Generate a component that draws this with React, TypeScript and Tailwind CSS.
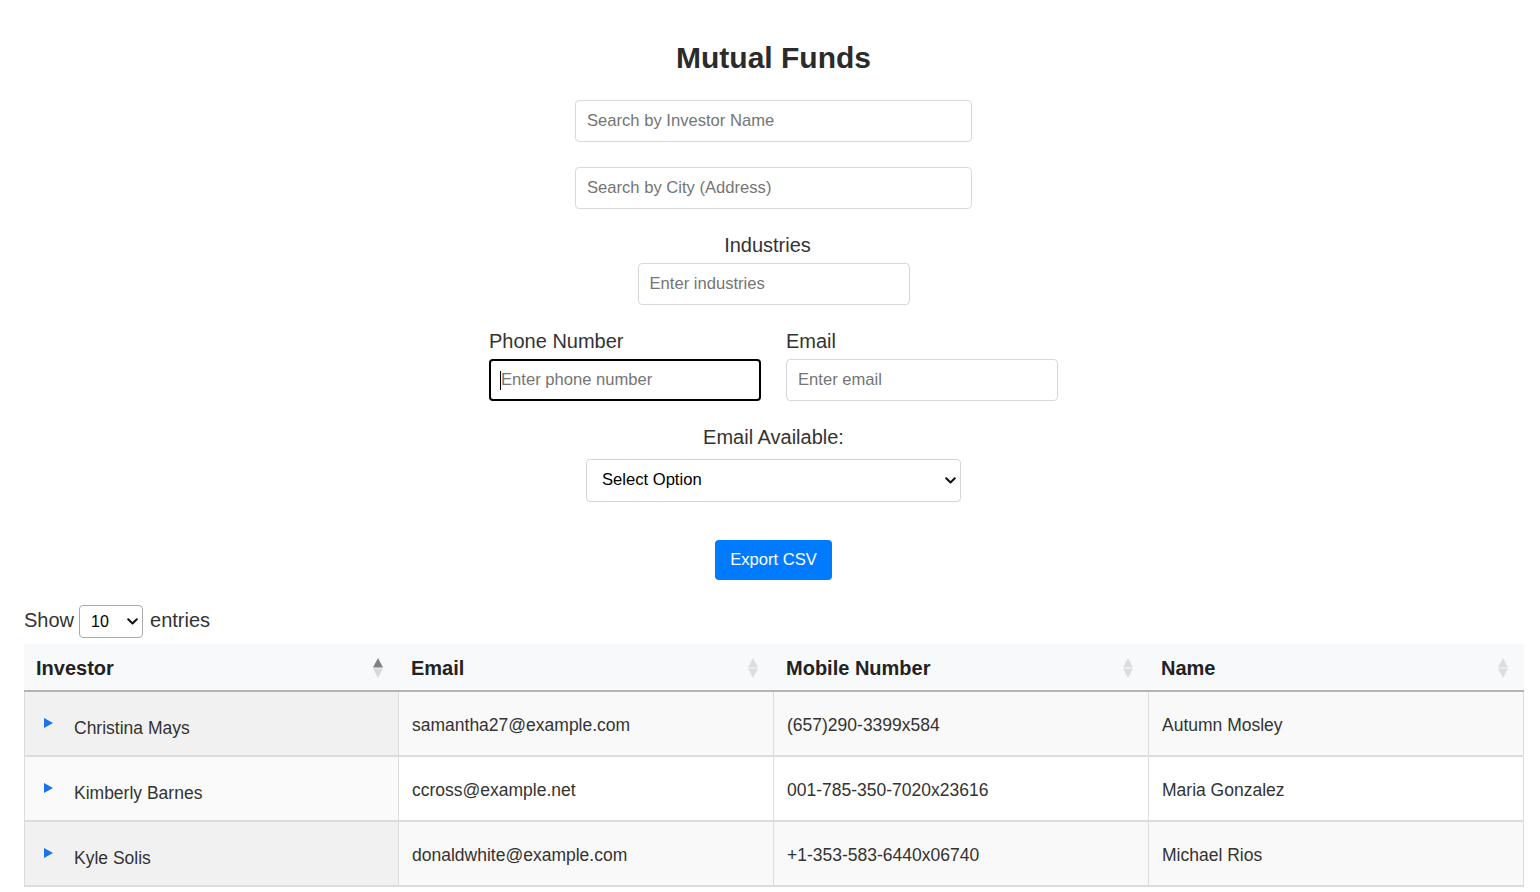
import React from "react";

type Row = { investor: string; email: string; mobile: string; name: string };

const rows: Row[] = [
  { investor: "Christina Mays", email: "samantha27@example.com", mobile: "(657)290-3399x584", name: "Autumn Mosley" },
  { investor: "Kimberly Barnes", email: "ccross@example.net", mobile: "001-785-350-7020x23616", name: "Maria Gonzalez" },
  { investor: "Kyle Solis", email: "donaldwhite@example.com", mobile: "+1-353-583-6440x06740", name: "Michael Rios" },
];

const headers = ["Investor", "Email", "Mobile Number", "Name"];

function Chevron({ className }: { className?: string }) {
  return (
    <svg className={className} width="11" height="7" viewBox="0 0 11 7" fill="none">
      <path d="M1.2 1.2l4.3 4.3 4.3-4.3" stroke="#111" strokeWidth="2" strokeLinecap="round" strokeLinejoin="round" />
    </svg>
  );
}

function SortIcon({ active }: { active?: boolean }) {
  return (
    <svg width="12" height="22" viewBox="0 0 12 22">
      <polygon points="6,1 11,10.5 1,10.5" fill={active ? "#808080" : "#dcdde0"} />
      <polygon points="1,11.5 11,11.5 6,21" fill={active ? "#d9d9d9" : "#dcdde0"} />
    </svg>
  );
}

function TextInput({ placeholder, className }: { placeholder: string; className: string }) {
  return (
    <input
      type="text"
      placeholder={placeholder}
      className={
        "h-[42px] rounded-[4px] border border-[#d9d9d9] bg-white px-[11px] text-[16.6px] text-[#333] placeholder:text-[#757575] outline-none " +
        className
      }
    />
  );
}

export default function App() {
  return (
    <div
      className="h-screen overflow-hidden bg-white pl-6 pr-[17px] text-[#333]"
      style={{ fontFamily: '"Liberation Sans", Arial, sans-serif' }}
    >
      <div className="flex flex-col items-center pt-[40px]">
        <h1 className="text-[30px] font-bold leading-9 text-[#2b2b2b]">Mutual Funds</h1>

        <TextInput placeholder="Search by Investor Name" className="mt-[24px] w-[397px]" />
        <TextInput placeholder="Search by City (Address)" className="mt-[25px] w-[397px]" />

        <label className="mt-[24px] mr-3 text-[20px] leading-6">Industries</label>
        <TextInput placeholder="Enter industries" className="mt-[6px] w-[272px]" />

        <div className="mt-[24px] flex gap-[25px]">
          <div className="flex w-[272px] flex-col">
            <label className="text-[20px] leading-6">Phone Number</label>
            <div className="relative mt-[6px]">
              <input
                type="text"
                placeholder="Enter phone number"
                className="h-[42px] w-[272px] rounded-[4px] border-2 border-black bg-white px-[10px] text-[16.6px] placeholder:text-[#757575] outline-none"
              />
              <span className="absolute left-[11px] top-[12px] h-[19px] w-px bg-black" />
            </div>
          </div>
          <div className="flex w-[272px] flex-col">
            <label className="text-[20px] leading-6">Email</label>
            <TextInput placeholder="Enter email" className="mt-[6px] w-[272px]" />
          </div>
        </div>

        <label className="mt-[24px] text-[20px] leading-6">Email Available:</label>
        <div className="relative mt-[10px]">
          <select className="h-[43px] w-[375px] appearance-none rounded-[4px] border border-[#d4d4d4] bg-white pl-[15px] text-[16.6px] text-black outline-none">
            <option>Select Option</option>
            <option>Yes</option>
            <option>No</option>
          </select>
          <Chevron className="pointer-events-none absolute right-[5px] top-[18px]" />
        </div>

        <button className="mt-[38px] h-[40px] rounded-[4px] bg-[#007bff] px-[15px] text-[16.6px] text-white">
          Export CSV
        </button>
      </div>

      <div className="mt-[25px] flex h-[33px] items-center text-[20px]">
        <span className="mb-[3px]">Show</span>
        <div className="relative ml-[5px] mr-[7px]">
          <select className="h-[33px] w-[64px] appearance-none rounded-[4px] border border-[#aaa] bg-white pl-[11px] text-[16px] text-black outline-none">
            <option>10</option>
            <option>25</option>
            <option>50</option>
            <option>100</option>
          </select>
          <Chevron className="pointer-events-none absolute right-[5px] top-[13px]" />
        </div>
        <span className="mb-[3px]">entries</span>
      </div>

      <div className="mt-[6px] w-[1500px]">
        <div className="grid h-[48px] grid-cols-4 border-b-2 border-[#b3b3b3] bg-[#f8f9fa]">
          {headers.map((h, i) => (
            <div key={h} className="flex items-center justify-between pl-3 pr-[15px] pt-[2px]">
              <span className="text-[20px] font-bold text-[#222]">{h}</span>
              <SortIcon active={i === 0} />
            </div>
          ))}
        </div>
        {rows.map((r, idx) => {
          const odd = idx % 2 === 0;
          const cell = "flex h-[65px] items-center border-b-2 border-r border-[#dcdcdc] pl-[13px] pt-[4px] text-[17.5px] text-[#333] ";
          const bg = odd ? "bg-[#f9f9f9]" : "bg-white";
          return (
            <div key={r.investor} className="grid grid-cols-4">
              <div className={cell + "border-l " + (odd ? "bg-[#f1f1f1]" : "bg-[#fafafa]")}>
                <svg width="9" height="10" viewBox="0 0 9 10" className="ml-[6px] -mt-[6px]">
                  <polygon points="0,0 9,5 0,10" fill="#1a73e8" />
                </svg>
                <span className="ml-[21px] mt-[6px]">{r.investor}</span>
              </div>
              <div className={cell + bg}>{r.email}</div>
              <div className={cell + bg}>{r.mobile}</div>
              <div className={cell + bg}>{r.name}</div>
            </div>
          );
        })}
      </div>
    </div>
  );
}
